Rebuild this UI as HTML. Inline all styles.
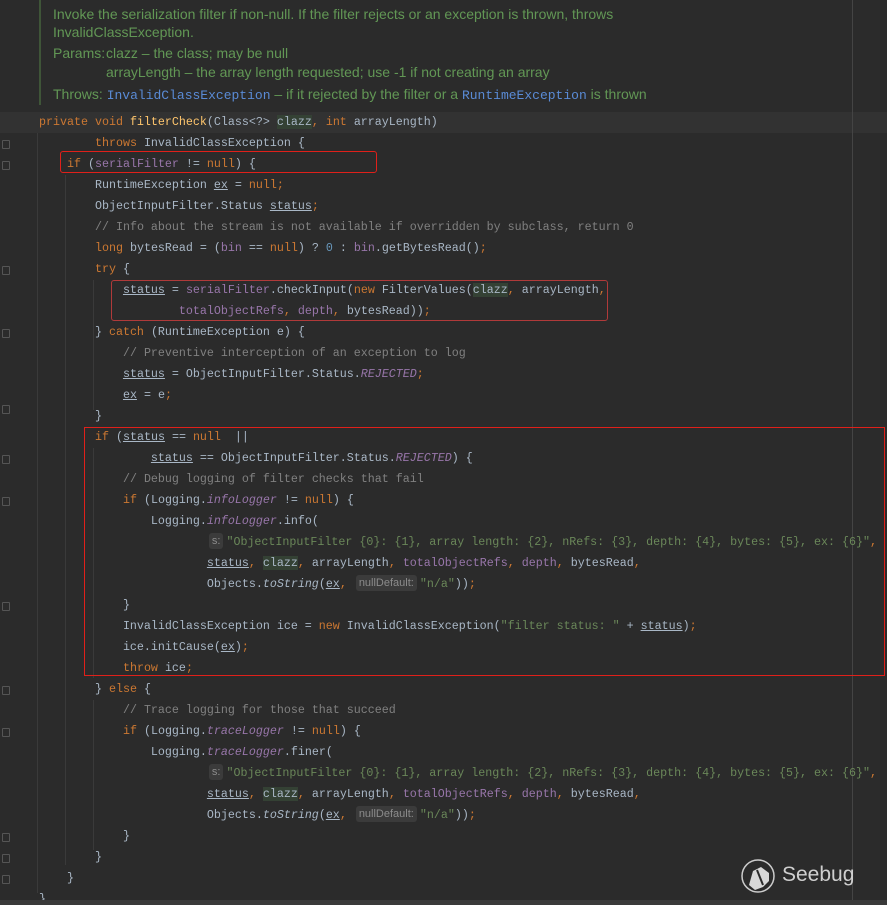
<!DOCTYPE html>
<html><head><meta charset="utf-8"><style>
html,body{margin:0;padding:0;background:#2b2b2b;width:887px;height:905px;overflow:hidden;position:relative}
.doc{position:absolute;left:53px;font-family:"Liberation Sans",sans-serif;font-size:14px;color:#629755;white-space:nowrap}
.bar{position:absolute;left:39px;top:0;width:2px;height:105px;background:#3f5538}
.hl{position:absolute;left:0;top:112px;width:887px;height:21px;background:#323232}
pre{position:absolute;left:39px;top:112px;margin:0;font-family:"Liberation Mono",monospace;font-size:11.67px;line-height:21px;color:#a9b7c6}
.k{color:#cc7832}.f{color:#9876aa}.fi{color:#9876aa;font-style:italic}.c{color:#808080}.s{color:#6a8759}.n{color:#6897bb}.m{color:#ffc66d}.i{font-style:italic}.u{text-decoration:underline}
.h{display:inline-block;background:#3b3b3b;color:#8c8c8c;font-family:"Liberation Sans",sans-serif;font-size:11px;line-height:16px;border-radius:3px;padding:0 3px;margin:0 3px 0 2px;vertical-align:1px}
.p{background:#344134}
.rb{position:absolute;border:1.5px solid #e0201a;box-sizing:border-box}
.rb1{border-radius:3px}
.vl{position:absolute;width:1px;background:#3a3a3a}
.fold{position:absolute;left:2px;width:8px;height:9px;border:1px solid #555;border-radius:1px;box-sizing:border-box}
</style></head><body>
<div class="bar"></div>
<div class="doc" style="top:6px">Invoke the serialization filter if non-null. If the filter rejects or an exception is thrown, throws</div>
<div class="doc" style="top:24px">InvalidClassException.</div>
<div class="doc" style="top:45px">Params:</div>
<div class="doc" style="top:45px;left:106px">clazz – the class; may be null</div>
<div class="doc" style="top:64px;left:106px">arrayLength – the array length requested; use -1 if not creating an array</div>
<div class="doc" style="top:86px">Throws: <span style="color:#5a8bd6;font-family:'Liberation Mono',monospace;font-size:13px">InvalidClassException</span> – if it rejected by the filter or a <span style="color:#5a8bd6;font-family:'Liberation Mono',monospace;font-size:13px">RuntimeException</span> is thrown</div>
<div class="hl"></div>
<div class="vl" style="left:37px;top:133px;height:760px"></div>
<div class="vl" style="left:65px;top:175px;height:690px"></div>
<div class="vl" style="left:93px;top:280px;height:130px"></div>
<div class="vl" style="left:93px;top:448px;height:230px"></div>
<div class="vl" style="left:93px;top:700px;height:150px"></div>
<div style="position:absolute;left:852px;top:0;width:1px;height:900px;background:#444"></div>
<div class="fold" style="top:140px"></div><div class="fold" style="top:161px"></div><div class="fold" style="top:266px"></div><div class="fold" style="top:329px"></div><div class="fold" style="top:405px"></div><div class="fold" style="top:455px"></div><div class="fold" style="top:497px"></div><div class="fold" style="top:602px"></div><div class="fold" style="top:686px"></div><div class="fold" style="top:728px"></div><div class="fold" style="top:833px"></div><div class="fold" style="top:854px"></div><div class="fold" style="top:875px"></div>
<pre><span class="k">private void </span><span class="m">filterCheck</span>(Class&lt;?&gt; <span class="p">clazz</span><span class="k">, int </span>arrayLength)
        <span class="k">throws </span>InvalidClassException {
    <span class="k">if </span>(<span class="f">serialFilter </span>!= <span class="k">null</span>) {
        RuntimeException <span class="u">ex</span> = <span class="k">null;</span>
        ObjectInputFilter.Status <span class="u">status</span><span class="k">;</span>
        <span class="c">// Info about the stream is not available if overridden by subclass, return 0</span>
        <span class="k">long </span>bytesRead = (<span class="f">bin </span>== <span class="k">null</span>) ? <span class="n">0 </span>: <span class="f">bin</span>.getBytesRead()<span class="k">;</span>
        <span class="k">try </span>{
            <span class="u">status</span> = <span class="f">serialFilter</span>.checkInput(<span class="k">new </span>FilterValues(<span class="p">clazz</span><span class="k">, </span>arrayLength<span class="k">,</span>
                    <span class="f">totalObjectRefs</span><span class="k">, </span><span class="f">depth</span><span class="k">, </span>bytesRead))<span class="k">;</span>
        } <span class="k">catch </span>(RuntimeException e) {
            <span class="c">// Preventive interception of an exception to log</span>
            <span class="u">status</span> = ObjectInputFilter.Status.<span class="fi">REJECTED</span><span class="k">;</span>
            <span class="u">ex</span> = e<span class="k">;</span>
        }
        <span class="k">if </span>(<span class="u">status</span> == <span class="k">null  </span>||
                <span class="u">status</span> == ObjectInputFilter.Status.<span class="fi">REJECTED</span>) {
            <span class="c">// Debug logging of filter checks that fail</span>
            <span class="k">if </span>(Logging.<span class="fi">infoLogger </span>!= <span class="k">null</span>) {
                Logging.<span class="fi">infoLogger</span>.info(
                        <span class="h">s:</span><span class="s">"ObjectInputFilter {0}: {1}, array length: {2}, nRefs: {3}, depth: {4}, bytes: {5}, ex: {6}"</span><span class="k">,</span>
                        <span class="u">status</span><span class="k">, </span><span class="p">clazz</span><span class="k">, </span>arrayLength<span class="k">, </span><span class="f">totalObjectRefs</span><span class="k">, </span><span class="f">depth</span><span class="k">, </span>bytesRead<span class="k">,</span>
                        Objects.<span class="i">toString</span>(<span class="u">ex</span><span class="k">, </span><span class="h">nullDefault:</span><span class="s">"n/a"</span>))<span class="k">;</span>
            }
            InvalidClassException ice = <span class="k">new </span>InvalidClassException(<span class="s">"filter status: " </span>+ <span class="u">status</span>)<span class="k">;</span>
            ice.initCause(<span class="u">ex</span>)<span class="k">;</span>
            <span class="k">throw </span>ice<span class="k">;</span>
        } <span class="k">else </span>{
            <span class="c">// Trace logging for those that succeed</span>
            <span class="k">if </span>(Logging.<span class="fi">traceLogger </span>!= <span class="k">null</span>) {
                Logging.<span class="fi">traceLogger</span>.finer(
                        <span class="h">s:</span><span class="s">"ObjectInputFilter {0}: {1}, array length: {2}, nRefs: {3}, depth: {4}, bytes: {5}, ex: {6}"</span><span class="k">,</span>
                        <span class="u">status</span><span class="k">, </span><span class="p">clazz</span><span class="k">, </span>arrayLength<span class="k">, </span><span class="f">totalObjectRefs</span><span class="k">, </span><span class="f">depth</span><span class="k">, </span>bytesRead<span class="k">,</span>
                        Objects.<span class="i">toString</span>(<span class="u">ex</span><span class="k">, </span><span class="h">nullDefault:</span><span class="s">"n/a"</span>))<span class="k">;</span>
            }
        }
    }
}</pre>
<div class="rb rb1" style="left:60px;top:151px;width:317px;height:22px"></div>
<div class="rb rb1" style="left:111px;top:280px;width:497px;height:41px;border-color:#b03a3a;border-width:1px"></div>
<div class="rb" style="left:84px;top:427px;width:801px;height:249px"></div>
<svg style="position:absolute;left:739px;top:857px" width="40" height="40" viewBox="0 0 40 40"><circle cx="19" cy="19" r="16" fill="none" stroke="#ccc" stroke-width="1.5"/><path d="M10 28 L14 14 L22 10 L30 16 L30 24 L24 30 L16 33 Z" fill="#d8d8d8"/><path d="M18 13 L24 28" stroke="#2b2b2b" stroke-width="2"/></svg>
<div style="position:absolute;left:782px;top:863px;font-family:'Liberation Sans',sans-serif;font-size:21px;color:#cfcfcf">Seebug</div>
<div style="position:absolute;left:0;top:900px;width:887px;height:5px;background:#3a3a3a"></div>
</body></html>
